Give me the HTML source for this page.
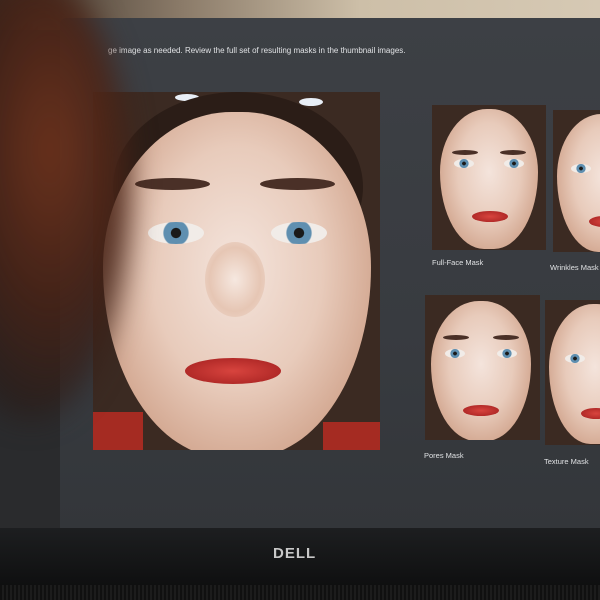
<!DOCTYPE html>
<html><head><meta charset="utf-8"><style>
*{margin:0;padding:0;box-sizing:border-box}
body{width:600px;height:600px;overflow:hidden;background:#2a2b2d;position:relative;font-family:"Liberation Sans",sans-serif}
.abs{position:absolute}
.wall{left:0;top:0;width:600px;height:30px;background:linear-gradient(90deg,#3a3028,#8a7a68 30%,#cdbfa8 60%,#d6c9b4)}
.screen{left:60px;top:18px;width:570px;height:515px;background:linear-gradient(180deg,#3d4045,#383b40 60%,#33363a);border-radius:6px}
.bezel{left:0;top:528px;width:600px;height:72px;background:linear-gradient(180deg,#1d1e20,#141516 50%,#0b0b0c)}
.grill{left:0;top:585px;width:600px;height:15px;background:repeating-linear-gradient(90deg,#101010 0 2px,#1c1c1c 2px 4px)}
.dell{left:273px;top:545px;color:#c8c8c8;font-size:15px;font-weight:bold;letter-spacing:1px}
.cap{color:#e0e2e4;font-size:7.5px}
.photo{background:#3b2a22;overflow:hidden}
.face{position:absolute;border-radius:48% 48% 45% 45%/45% 45% 55% 55%;background:radial-gradient(ellipse at 50% 45%,#f4e4dc 0%,#e8cbbb 45%,#cfa189 80%,#8e5e4a 100%)}
.hair{position:absolute;background:#2b1d17;border-radius:50%}
.eye{position:absolute;border-radius:50%;background:radial-gradient(circle,#1a1a1a 0 16%,#5f8fb0 18% 40%,#f1ece8 44%);}
.brow{position:absolute;background:#4a3027;border-radius:50%}
.lip{position:absolute;border-radius:50%;background:radial-gradient(ellipse,#d8443e,#b22a28 70%,#9a2a28)}
.nose{position:absolute;border-radius:50%;background:radial-gradient(ellipse,#f6e8e0,#e6c6b4 60%,rgba(0,0,0,0))}
.shirt{position:absolute;background:#a52b22}
.head{left:-70px;top:-30px;width:200px;height:450px;border-radius:50%;background:radial-gradient(ellipse at 60% 40%,rgba(110,50,28,.95) 0%,rgba(70,34,22,.9) 40%,rgba(40,26,22,.6) 70%,rgba(40,30,28,0) 100%);filter:blur(14px)}
.light{position:absolute;background:#e8eef6;border-radius:50%}
</style></head><body>
<div class="abs wall"></div>
<div class="abs screen"></div>
<div class="abs cap" style="left:108px;top:46px;font-size:8px">ge image as needed. Review the full set of resulting masks in the thumbnail images.</div>

<div class="abs photo" style="left:93px;top:92px;width:287px;height:358px">
  <div class="light" style="left:82px;top:2px;width:24px;height:7px"></div>
  <div class="light" style="left:206px;top:6px;width:24px;height:8px"></div>
  <div class="hair" style="left:20px;top:0px;width:250px;height:190px"></div>
  <div class="shirt" style="left:0;top:320px;width:50px;height:40px"></div>
  <div class="shirt" style="left:230px;top:330px;width:60px;height:30px"></div>
  <div class="face" style="left:10px;top:20px;width:268px;height:345px"></div>
  <div class="brow" style="left:42px;top:86px;width:75px;height:12px"></div>
  <div class="brow" style="left:167px;top:86px;width:75px;height:12px"></div>
  <div class="eye" style="left:55px;top:130px;width:56px;height:22px"></div>
  <div class="eye" style="left:178px;top:130px;width:56px;height:22px"></div>
  <div class="nose" style="left:112px;top:150px;width:60px;height:75px"></div>
  <div class="lip" style="left:92px;top:266px;width:96px;height:26px"></div>
</div>

<div class="abs photo" style="left:432px;top:105px;width:114px;height:145px">
  <div class="face" style="left:8px;top:4px;width:98px;height:140px"></div>
  <div class="brow" style="left:20px;top:45px;width:26px;height:5px"></div>
  <div class="brow" style="left:68px;top:45px;width:26px;height:5px"></div>
  <div class="eye" style="left:22px;top:54px;width:20px;height:9px"></div>
  <div class="eye" style="left:72px;top:54px;width:20px;height:9px"></div>
  <div class="lip" style="left:40px;top:106px;width:36px;height:11px"></div>
</div>
<div class="abs photo" style="left:553px;top:110px;width:60px;height:142px">
  <div class="face" style="left:4px;top:4px;width:92px;height:138px"></div>
  <div class="eye" style="left:18px;top:54px;width:20px;height:9px"></div>
  <div class="lip" style="left:36px;top:106px;width:30px;height:11px"></div>
</div>
<div class="abs photo" style="left:425px;top:295px;width:115px;height:145px">
  <div class="face" style="left:6px;top:6px;width:100px;height:140px"></div>
  <div class="brow" style="left:18px;top:40px;width:26px;height:5px"></div>
  <div class="brow" style="left:68px;top:40px;width:26px;height:5px"></div>
  <div class="eye" style="left:20px;top:54px;width:20px;height:9px"></div>
  <div class="eye" style="left:72px;top:54px;width:20px;height:9px"></div>
  <div class="lip" style="left:38px;top:110px;width:36px;height:11px"></div>
</div>
<div class="abs photo" style="left:545px;top:300px;width:60px;height:145px">
  <div class="face" style="left:4px;top:4px;width:92px;height:140px"></div>
  <div class="eye" style="left:20px;top:54px;width:20px;height:9px"></div>
  <div class="lip" style="left:36px;top:108px;width:30px;height:11px"></div>
</div>
<div class="abs cap" style="left:432px;top:258px">Full-Face Mask</div>
<div class="abs cap" style="left:550px;top:263px">Wrinkles Mask</div>
<div class="abs cap" style="left:424px;top:451px">Pores Mask</div>
<div class="abs cap" style="left:544px;top:457px">Texture Mask</div>

<div class="abs head"></div>
<div class="abs bezel"></div>
<div class="abs grill"></div>
<div class="abs dell">DELL</div>
</body></html>
